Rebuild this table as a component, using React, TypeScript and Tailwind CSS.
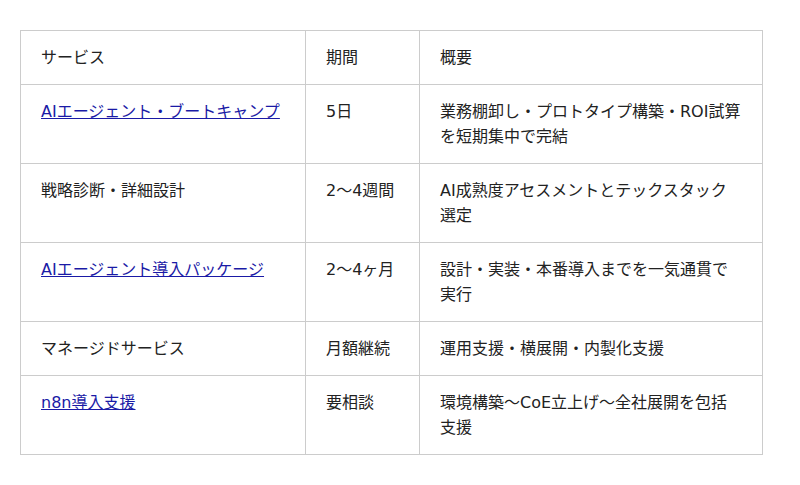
const rows: { name: string; link: boolean; period: string; summary: string }[] = [
  { name: 'AIエージェント・ブートキャンプ', link: true, period: '5日', summary: '業務棚卸し・プロトタイプ構築・ROI試算を短期集中で完結' },
  { name: '戦略診断・詳細設計', link: false, period: '2〜4週間', summary: 'AI成熟度アセスメントとテックスタック選定' },
  { name: 'AIエージェント導入パッケージ', link: true, period: '2〜4ヶ月', summary: '設計・実装・本番導入までを一気通貫で実行' },
  { name: 'マネージドサービス', link: false, period: '月額継続', summary: '運用支援・横展開・内製化支援' },
  { name: 'n8n導入支援', link: true, period: '要相談', summary: '環境構築〜CoE立上げ〜全社展開を包括支援' },
];

const cell = 'border border-[#cccccc] px-5 py-[14px] align-top text-left font-normal';

export default function App() {
  return (
    <div className="min-h-[485px] bg-white pl-5 pt-[30px] font-['DejaVu_Sans','Noto_Sans_CJK_JP',sans-serif] text-[16px] leading-[25px] text-[#222222]">
      <table className="w-[742px] table-fixed border-collapse">
        <colgroup>
          <col className="w-[285px]" />
          <col className="w-[114px]" />
          <col className="w-[343px]" />
        </colgroup>
        <thead>
          <tr>
            <th className={cell}>サービス</th>
            <th className={cell}>期間</th>
            <th className={cell}>概要</th>
          </tr>
        </thead>
        <tbody>
          {rows.map((r) => (
            <tr key={r.name}>
              <td className={cell}>
                {r.link ? (
                  <a href="#" className="text-[#1a1aa6] underline">
                    {r.name}
                  </a>
                ) : (
                  r.name
                )}
              </td>
              <td className={cell}>{r.period}</td>
              <td className={cell}>{r.summary}</td>
            </tr>
          ))}
        </tbody>
      </table>
    </div>
  );
}
